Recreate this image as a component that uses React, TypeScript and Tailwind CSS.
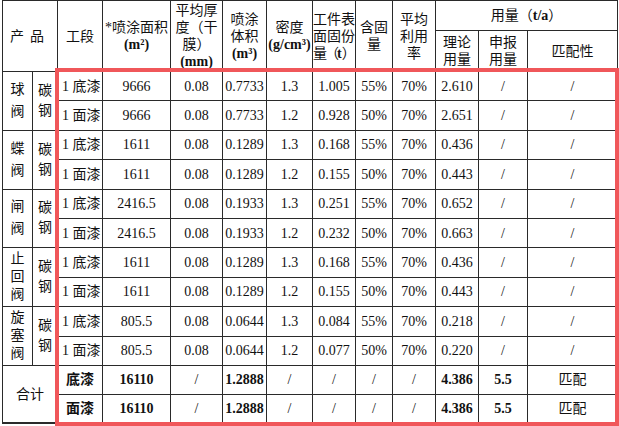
import React from "react";

type Coat = {
  step: string;
  area: string;
  vol: string;
  density: string;
  solid: string;
  ratio: string;
  theory: string;
};

const groups: { name: string; coats: Coat[] }[] = [
  {
    name: "球阀",
    coats: [
      { step: "1 底漆", area: "9666", vol: "0.7733", density: "1.3", solid: "1.005", ratio: "55%", theory: "2.610" },
      { step: "1 面漆", area: "9666", vol: "0.7733", density: "1.2", solid: "0.928", ratio: "50%", theory: "2.651" },
    ],
  },
  {
    name: "蝶阀",
    coats: [
      { step: "1 底漆", area: "1611", vol: "0.1289", density: "1.3", solid: "0.168", ratio: "55%", theory: "0.436" },
      { step: "1 面漆", area: "1611", vol: "0.1289", density: "1.2", solid: "0.155", ratio: "50%", theory: "0.443" },
    ],
  },
  {
    name: "闸阀",
    coats: [
      { step: "1 底漆", area: "2416.5", vol: "0.1933", density: "1.3", solid: "0.251", ratio: "55%", theory: "0.652" },
      { step: "1 面漆", area: "2416.5", vol: "0.1933", density: "1.2", solid: "0.232", ratio: "50%", theory: "0.663" },
    ],
  },
  {
    name: "止回阀",
    coats: [
      { step: "1 底漆", area: "1611", vol: "0.1289", density: "1.3", solid: "0.168", ratio: "55%", theory: "0.436" },
      { step: "1 面漆", area: "1611", vol: "0.1289", density: "1.2", solid: "0.155", ratio: "50%", theory: "0.443" },
    ],
  },
  {
    name: "旋塞阀",
    coats: [
      { step: "1 底漆", area: "805.5", vol: "0.0644", density: "1.3", solid: "0.084", ratio: "55%", theory: "0.218" },
      { step: "1 面漆", area: "805.5", vol: "0.0644", density: "1.2", solid: "0.077", ratio: "50%", theory: "0.220" },
    ],
  },
];

const cell = "border border-[#2a2a2a] p-0 text-center align-middle";
const th = "border border-[#2a2a2a] p-0 text-center align-middle font-normal leading-[17px]";

function Header() {
  return (
    <thead>
      <tr className="h-[30px]">
        <th rowSpan={2} colSpan={2} className={th}>
          <span className="tracking-[6px]">产品</span>
        </th>
        <th rowSpan={2} className={th}>工段</th>
        <th rowSpan={2} className={th}>
          *喷涂面积
          <br />
          <b>(m²)</b>
        </th>
        <th rowSpan={2} className={th + " align-top"}>
          <div className="h-[68px] overflow-hidden pt-[1px]">
            平均厚
            <br />
            度（干
            <br />
            膜）
            <br />
            <b>(mm)</b>
          </div>
        </th>
        <th rowSpan={2} className={th}>
          喷涂
          <br />
          体积
          <br />
          <b>(m³)</b>
        </th>
        <th rowSpan={2} className={th}>
          密度
          <br />
          <b>(g/cm³)</b>
        </th>
        <th rowSpan={2} className={th + " whitespace-nowrap text-left"}>
          工件表
          <br />
          面固份
          <br />
          <span className="tracking-[-2px]">量（</span>
          <b>t</b>
          <span className="tracking-[-2px]">）</span>
        </th>
        <th rowSpan={2} className={th}>
          含固
          <br />量
        </th>
        <th rowSpan={2} className={th}>
          平均
          <br />
          利用
          <br />率
        </th>
        <th colSpan={3} className={th}>
          用量（<b>t/a</b>）
        </th>
      </tr>
      <tr className="h-[41px]">
        <th className={th}>
          理论
          <br />
          用量
        </th>
        <th className={th}>
          申报
          <br />
          用量
        </th>
        <th className={th}>匹配性</th>
      </tr>
    </thead>
  );
}

export default function App() {
  return (
    <div className="relative h-[426px] w-[619px] overflow-hidden bg-white">
      <div className="pl-[2px]">
        <table
          className="table-fixed border-collapse text-[14px] text-[#111]"
          style={{ fontFamily: '"Liberation Serif", "Noto Sans CJK SC", serif' }}
        >
          <colgroup>
            <col className="w-[30px]" />
            <col className="w-[25px]" />
            <col className="w-[45px]" />
            <col className="w-[68px]" />
            <col className="w-[52px]" />
            <col className="w-[44px]" />
            <col className="w-[46px]" />
            <col className="w-[43px]" />
            <col className="w-[37px]" />
            <col className="w-[43px]" />
            <col className="w-[43px]" />
            <col className="w-[49px]" />
            <col className="w-[90px]" />
          </colgroup>
          <Header />
          <tbody>
            {groups.map((g) =>
              g.coats.map((c, i) => (
                <tr key={g.name + i} className="h-[29.4px]">
                  {i === 0 && (
                    <>
                      <td
                        rowSpan={2}
                        className={
                          cell +
                          (g.name.length > 2 ? " leading-[18px]" : " leading-[22px]")
                        }
                      >
                        {g.name.split("").map((ch) => (
                          <div key={ch}>{ch}</div>
                        ))}
                      </td>
                      <td rowSpan={2} className={cell + " leading-[20px]"}>
                        <div>碳</div>
                        <div>钢</div>
                      </td>
                    </>
                  )}
                  <td className={cell + " pl-[4px] text-left"}>{c.step}</td>
                  <td className={cell}>{c.area}</td>
                  <td className={cell}>0.08</td>
                  <td className={cell}>{c.vol}</td>
                  <td className={cell}>{c.density}</td>
                  <td className={cell}>{c.solid}</td>
                  <td className={cell}>{c.ratio}</td>
                  <td className={cell}>70%</td>
                  <td className={cell}>{c.theory}</td>
                  <td className={cell}>/</td>
                  <td className={cell}>/</td>
                </tr>
              ))
            )}
            {["底漆", "面漆"].map((t, i) => (
              <tr key={t} className="h-[29px]">
                {i === 0 && (
                  <td rowSpan={2} colSpan={2} className={cell + " border-b-2"}>
                    合计
                  </td>
                )}
                <td className={cell + " font-bold" + (i === 1 ? " border-b-2" : "")}>{t}</td>
                <td className={cell + " font-bold" + (i === 1 ? " border-b-2" : "")}>16110</td>
                <td className={cell + (i === 1 ? " border-b-2" : "")}>/</td>
                <td className={cell + " font-bold" + (i === 1 ? " border-b-2" : "")}>1.2888</td>
                <td className={cell + (i === 1 ? " border-b-2" : "")}>/</td>
                <td className={cell + (i === 1 ? " border-b-2" : "")}>/</td>
                <td className={cell + (i === 1 ? " border-b-2" : "")}>/</td>
                <td className={cell + (i === 1 ? " border-b-2" : "")}>/</td>
                <td className={cell + " font-bold" + (i === 1 ? " border-b-2" : "")}>4.386</td>
                <td className={cell + " font-bold" + (i === 1 ? " border-b-2" : "")}>5.5</td>
                <td className={cell + (i === 1 ? " border-b-2" : "")}>匹配</td>
              </tr>
            ))}
          </tbody>
        </table>
      </div>

      {/* red highlight annotation over the data rows */}
      <div className="pointer-events-none absolute left-[55px] top-[68px] h-[358px] w-[564px] border-4 border-[#f0575a]" />
    </div>
  );
}
